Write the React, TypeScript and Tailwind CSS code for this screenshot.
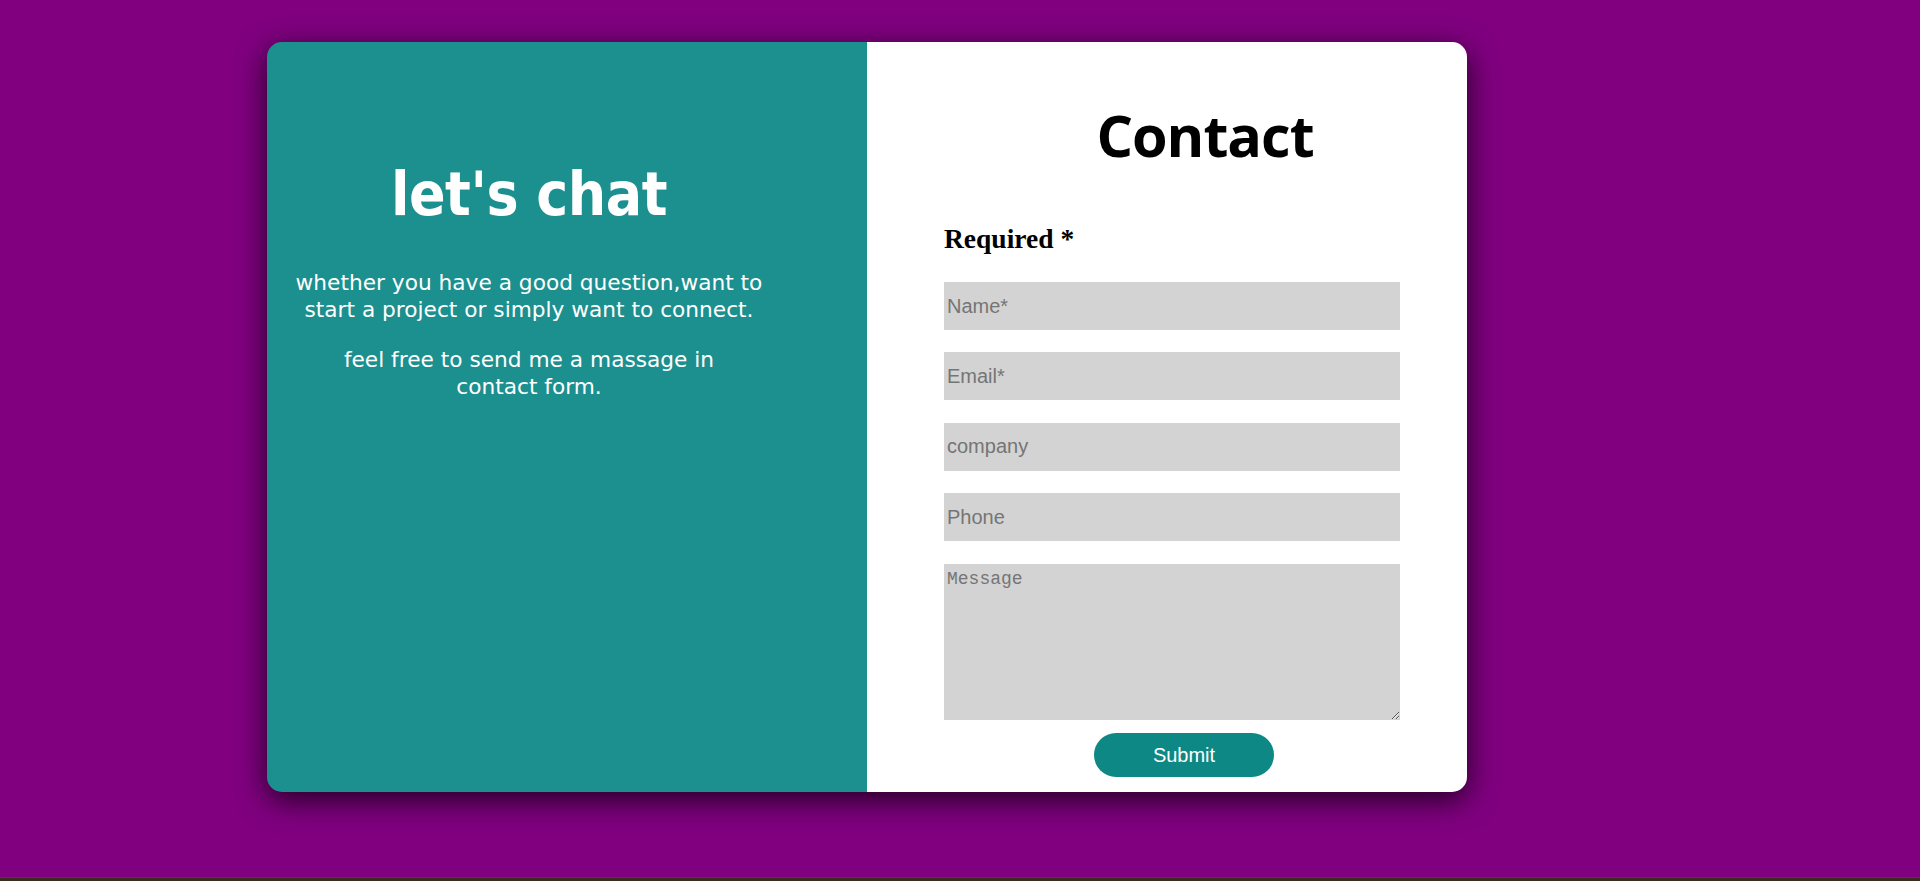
import { ReactElement } from "react";

const fields = [
    { placeholder: "Name*", type: "text" },
    { placeholder: "Email*", type: "email" },
    { placeholder: "company", type: "text" },
    { placeholder: "Phone", type: "tel" },
];

function ChatPanel(): ReactElement {
    return (
        <div className="w-[600px] bg-[#1c8f8f] text-white">
            {/* Intro text */}
            <div className="w-[524px] pt-[116px] text-center font-['DejaVu_Sans',sans-serif]">
                <h2 className="text-[60px] font-bold leading-[1.2] tracking-[-0.5px] font-['DejaVu_Sans_Condensed','DejaVu_Sans',sans-serif]">
                    let's chat
                </h2>
                <p className="mt-[39px] text-[21.7px] leading-[27px]">
                    whether you have a good question,want to
                    <br />
                    start a project or simply want to connect.
                </p>
                <p className="mt-[23px] text-[21.7px] leading-[27px]">
                    feel free to send me a massage in
                    <br />
                    contact form.
                </p>
            </div>
        </div>
    );
}

function ContactForm(): ReactElement {
    return (
        <div className="w-[600px] bg-white">
            <h1 className="pl-[76px] pt-[65px] text-center text-[57.5px] font-bold leading-none text-black font-['Open_Sans',sans-serif] tracking-[-1px]">
                Contact
            </h1>

            <form className="ml-[77px] w-[456px]" onSubmit={(e) => e.preventDefault()}>
                <p className="mt-[60px] text-[27.5px] font-bold leading-none text-black font-['Liberation_Serif',serif]">
                    Required *
                </p>

                <div className="mt-[30px] flex flex-col gap-[22.4px]">
                    {fields.map((f) => (
                        <input
                            key={f.placeholder}
                            type={f.type}
                            placeholder={f.placeholder}
                            className="h-[48px] w-full bg-[#d3d3d3] px-[3px] text-[20px] text-black outline-none placeholder:text-[#757575] font-['Liberation_Sans',sans-serif]"
                        />
                    ))}
                    <textarea
                        placeholder="Message"
                        className="h-[156px] w-full bg-[#d3d3d3] px-[3px] py-[2px] text-[18px] text-black outline-none placeholder:text-[#757575] font-['Liberation_Mono',monospace]"
                    />
                </div>

                {/* Submit */}
                <button
                    type="submit"
                    className="ml-[150px] mt-[13px] h-[44px] w-[180px] rounded-full bg-[#0e8884] text-[20px] text-white font-['Liberation_Sans',sans-serif] cursor-pointer"
                >
                    Submit
                </button>
            </form>
        </div>
    );
}

export default function App() {
    return (
        <div className="flex min-h-[881px] w-full flex-col bg-[#800080]">
            <div className="flex-1 pl-[267px] pt-[42px]">
                <div className="flex h-[750px] w-[1200px] overflow-hidden rounded-[15px] shadow-[0_8px_30px_rgba(0,0,0,0.75)]">
                    <ChatPanel />
                    <ContactForm />
                </div>
            </div>
            {/* bottom strip */}
            <div className="h-[4px] border-t border-[#5a3b2b] bg-[#3b2a20]" />
        </div>
    );
}
